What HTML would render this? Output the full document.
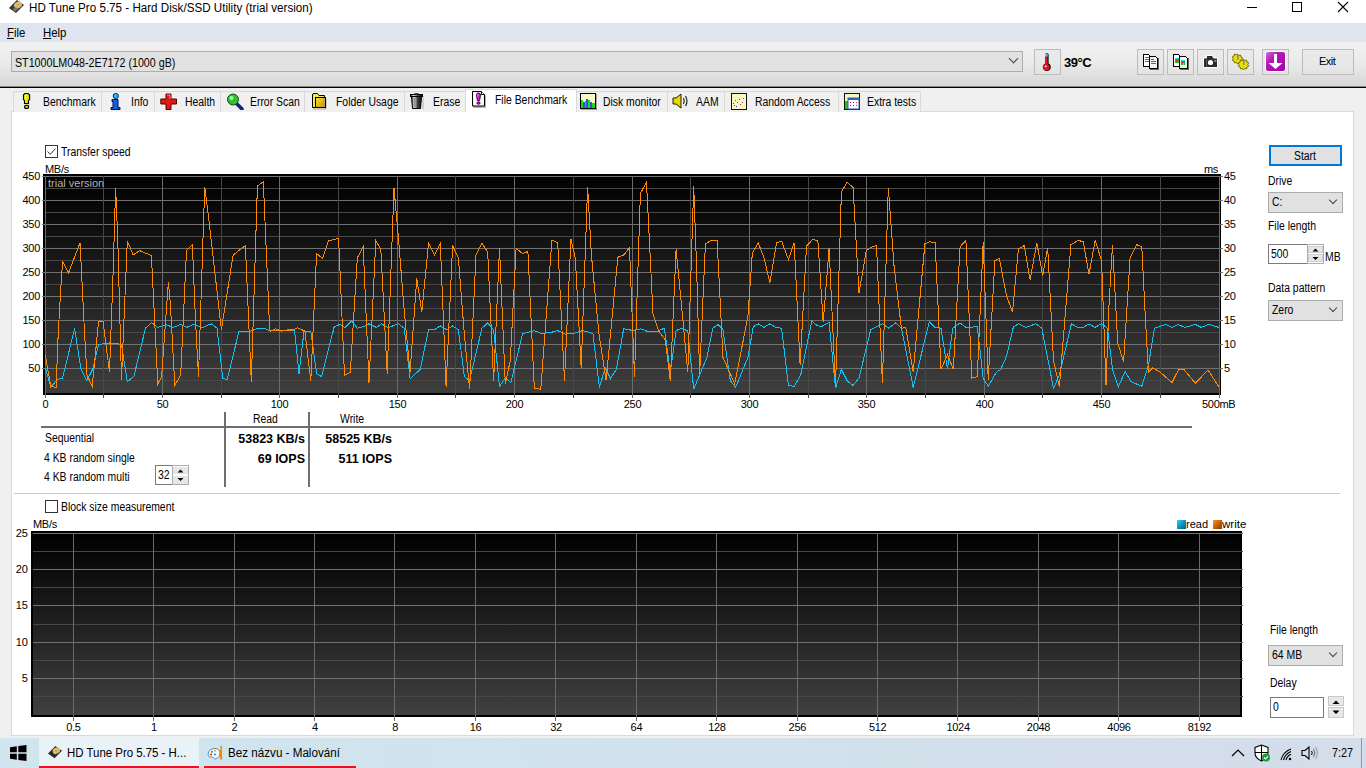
<!DOCTYPE html><html><head><meta charset="utf-8"><style>
*{margin:0;padding:0;box-sizing:border-box}
html,body{width:1366px;height:768px;overflow:hidden;background:#f0f0f0;font-family:"Liberation Sans",sans-serif;font-size:11px;color:#000}
body{position:relative}
.a{position:absolute;white-space:nowrap;line-height:1}
.n{transform-origin:0 0}
.tab{position:absolute;top:91px;height:21px;background:#f0f0f0;border:1px solid #d9d9d9;border-bottom:none}
.tab.sel{top:89px;height:23px;background:#fff;z-index:2}
.tb{position:absolute;top:49px;height:26px;border:1px solid #bcbcbc;background:rgba(230,230,230,.5)}
.combo{position:absolute;background:#e1e1e1;border:1px solid #acacac}
.chev{position:absolute;width:7px;height:7px;border-right:1px solid #444;border-bottom:1px solid #444;transform:rotate(45deg)}
.lbl{position:absolute;white-space:nowrap;line-height:1;font-size:11px;letter-spacing:-0.3px}
</style></head><body>
<div class="a" style="left:0;top:0;width:1366px;height:23px;background:#fff"></div>
<svg class="a" style="left:8px;top:0px" width="17" height="15" viewBox="0 0 17 15">
<polygon points="1,8 9,0 16,5 8,13" fill="#2a2a2a"/>
<polygon points="2,8 9,1 15,5 8,12" fill="#3a3a3a"/>
<ellipse cx="10" cy="5" rx="4.2" ry="3.3" fill="#e8b868" transform="rotate(-30 10 5)"/>
<circle cx="10" cy="5" r="1.3" fill="#aaa"/>
<rect x="5" y="8" width="4" height="3" fill="#777" transform="rotate(-35 7 9)"/>
</svg>
<div class="a" style="left:29px;top:2px;font-size:12.5px;letter-spacing:0px;color:#000;transform:scaleX(0.93);transform-origin:0 0;">HD Tune Pro 5.75 - Hard Disk/SSD Utility (trial version)</div>
<div class="a" style="left:1247px;top:7px;width:10px;height:1px;background:#000"></div>
<div class="a" style="left:1292px;top:2px;width:10px;height:10px;border:1px solid #000"></div>
<svg class="a" style="left:1337px;top:1px" width="12" height="12" viewBox="0 0 12 12"><path d="M1 1L11 11M11 1L1 11" stroke="#000" stroke-width="1.1"/></svg>
<div class="a" style="left:0;top:23px;width:1366px;height:19px;background:#dee5ef"></div>
<div class="a" style="left:7px;top:27px;font-size:12px;letter-spacing:0px;color:#000;transform:scaleX(0.95);transform-origin:0 0;"><u>F</u>ile</div>
<div class="a" style="left:43px;top:27px;font-size:12px;letter-spacing:0px;color:#000;transform:scaleX(0.95);transform-origin:0 0;"><u>H</u>elp</div>
<div class="a" style="left:0;top:42px;width:1366px;height:45px;background:linear-gradient(#f1f1f1,#ebebeb 45%,#d6d6d6)"></div>
<div class="a" style="left:0;top:87px;width:1366px;height:1px;background:#000"></div>
<div class="a" style="left:0;top:86px;width:1366px;height:1px;background:#8a8a8a"></div>
<div class="combo" style="left:11px;top:51px;width:1012px;height:21px"></div>
<div class="a" style="left:15px;top:56.5px;font-size:12px;letter-spacing:0px;color:#000;transform:scaleX(0.89);transform-origin:0 0;">ST1000LM048-2E7172 (1000 gB)</div>
<div class="chev" style="left:1010px;top:55px"></div>
<div class="tb" style="left:1034px;top:49px;width:27px;height:26px"></div>
<svg class="a" style="left:1042px;top:52px" width="11" height="19" viewBox="0 0 11 19">
<path d="M3 2.5Q3 1 4.8 1Q6.6 1 6.6 2.5V11.5A4 4 0 1 1 3 11.5Z" fill="#000"/><path d="M3 3Q3 1.5 4.3 1.5Q5.6 1.5 5.6 3V12A3.4 3.4 0 1 1 3 12Z" fill="#e81020"/>
<rect x="3" y="1.5" width="2.6" height="3" fill="#40d8f0"/><circle cx="3.8" cy="14.3" r="0.9" fill="#fff"/><path d="M1.2 13.5Q1.3 12.5 2 12" stroke="#40d8f0" fill="none"/></svg>
<div class="a" style="left:1064px;top:55.5px;font-size:13px;letter-spacing:-0.5px;color:#000;font-weight:bold;">39°C</div>
<div class="tb" style="left:1137px;width:27px"></div>
<div class="tb" style="left:1167px;width:27px"></div>
<div class="tb" style="left:1197px;width:27px"></div>
<div class="tb" style="left:1227px;width:27px"></div>
<div class="tb" style="left:1262px;width:27px"></div>
<div class="tb" style="left:1302px;width:52px"></div>
<div class="a" style="left:1319px;top:56px;font-size:11px;letter-spacing:-0.5px;color:#000;">Exit</div>
<svg class="a" style="left:1142px;top:53px" width="18" height="17" viewBox="0 0 18 17" shape-rendering="crispEdges">
<path d="M1.5 1.5h5l1 1v11h-6z" fill="#fff" stroke="#000"/><rect x="3" y="4" width="4" height="1" fill="#1a6cff"/><rect x="3" y="6" width="4" height="1" fill="#1a6cff"/><rect x="3" y="8" width="4" height="1" fill="#1a6cff"/>
<path d="M7.5 3.5h6l2 2v10h-8z" fill="#f4f4f4" stroke="#000"/><rect x="16" y="5" width="1" height="11" fill="#666"/><rect x="8" y="16" width="9" height="1" fill="#666"/><rect x="9" y="6" width="3" height="1" fill="#1a6cff"/><rect x="9" y="8" width="5" height="1" fill="#1a6cff"/><rect x="9" y="10" width="5" height="1" fill="#1a6cff"/></svg>
<svg class="a" style="left:1172px;top:53px" width="18" height="17" viewBox="0 0 18 17" shape-rendering="crispEdges">
<path d="M1.5 1.5h5l1 1v11h-6z" fill="#fff" stroke="#000"/><rect x="3" y="5" width="4" height="1" fill="#20d0ff"/><rect x="3" y="6" width="4" height="4" fill="#10c010"/><rect x="4" y="7" width="1" height="1" fill="#e00"/>
<path d="M7.5 3.5h6l2 2v10h-8z" fill="#f4f4f4" stroke="#000"/><rect x="16" y="5" width="1" height="11" fill="#666"/><rect x="8" y="16" width="9" height="1" fill="#666"/><rect x="9" y="7" width="4" height="1" fill="#20d0ff"/><rect x="9" y="8" width="4" height="4" fill="#10c010"/><rect x="10" y="9" width="1" height="1" fill="#e00"/><rect x="11" y="10" width="1" height="2" fill="#e0d000"/></svg>
<svg class="a" style="left:1202px;top:54px" width="17" height="15" viewBox="0 0 17 15">
<path d="M4.5 1.5h6l1 2.5h4v9.5h-14v-9.5h3z" fill="#2b2b2b" stroke="#fff" stroke-width="1"/><rect x="4" y="4" width="1" height="9" fill="#555"/><circle cx="8.5" cy="8.5" r="2.6" fill="#fff"/><rect x="12.5" y="6" width="2" height="2" fill="#20e020"/></svg>
<svg class="a" style="left:1232px;top:53px" width="18" height="17" viewBox="0 0 18 17">
<g fill="#e8e000" stroke="#5a5000" stroke-width="0.8"><path d="M5.5 1l1.2 1.6 1.9-.5.3 1.9 1.8.8-.9 1.7.9 1.7-1.8.8-.3 1.9-1.9-.5L5.5 11 4.3 9.4l-1.9.5-.3-1.9L.3 7.2 1.2 5.5.3 3.8l1.8-.8.3-1.9 1.9.5z"/>
<path d="M11.5 6l1.2 1.6 1.9-.5.3 1.9 1.8.8-.9 1.7.9 1.7-1.8.8-.3 1.9-1.9-.5-1.2 1.6-1.2-1.6-1.9.5-.3-1.9-1.8-.8.9-1.7-.9-1.7 1.8-.8.3-1.9 1.9.5z"/></g>
<rect x="5" y="2" width="1.6" height="5" fill="#8a8aa0"/><rect x="11" y="7" width="1.6" height="5" fill="#8a8aa0"/></svg>
<svg class="a" style="left:1265px;top:51px" width="21" height="21" viewBox="0 0 21 21">
<defs><linearGradient id="pg" x1="0" y1="0" x2="1" y2="1"><stop offset="0" stop-color="#e070e0"/><stop offset=".35" stop-color="#b818b8"/><stop offset="1" stop-color="#a000a8"/></linearGradient></defs>
<rect x="0.5" y="0.5" width="20" height="20" rx="2.5" fill="url(#pg)" stroke="#fff" stroke-width="1"/>
<rect x="9" y="3" width="3" height="10" fill="#fff"/><path d="M3.5 12h14l-7 6z" fill="#fff"/></svg>
<div class="a" style="left:11px;top:111px;width:1343px;height:625px;background:#fff;border:1px solid #dadada"></div>
<div class="tab" style="left:13px;width:89px"></div>
<div class="a" style="left:42.5px;top:96.1px;font-size:12px;letter-spacing:0px;color:#000;transform:scaleX(0.867);transform-origin:0 0;z-index:3">Benchmark</div>
<div class="tab" style="left:101px;width:54px"></div>
<div class="a" style="left:131px;top:96.1px;font-size:12px;letter-spacing:0px;color:#000;transform:scaleX(0.867);transform-origin:0 0;z-index:3">Info</div>
<div class="tab" style="left:154px;width:67px"></div>
<div class="a" style="left:184.6px;top:96.1px;font-size:12px;letter-spacing:0px;color:#000;transform:scaleX(0.867);transform-origin:0 0;z-index:3">Health</div>
<div class="tab" style="left:220px;width:85px"></div>
<div class="a" style="left:250px;top:96.1px;font-size:12px;letter-spacing:0px;color:#000;transform:scaleX(0.867);transform-origin:0 0;z-index:3">Error Scan</div>
<div class="tab" style="left:304px;width:101px"></div>
<div class="a" style="left:335.6px;top:96.1px;font-size:12px;letter-spacing:0px;color:#000;transform:scaleX(0.867);transform-origin:0 0;z-index:3">Folder Usage</div>
<div class="tab" style="left:404px;width:62px"></div>
<div class="a" style="left:433.4px;top:96.1px;font-size:12px;letter-spacing:0px;color:#000;transform:scaleX(0.867);transform-origin:0 0;z-index:3">Erase</div>
<div class="tab sel" style="left:465px;width:112px"></div>
<div class="a" style="left:495px;top:94.1px;font-size:12px;letter-spacing:0px;color:#000;transform:scaleX(0.867);transform-origin:0 0;z-index:3">File Benchmark</div>
<div class="tab" style="left:576px;width:92px"></div>
<div class="a" style="left:603px;top:96.1px;font-size:12px;letter-spacing:0px;color:#000;transform:scaleX(0.867);transform-origin:0 0;z-index:3">Disk monitor</div>
<div class="tab" style="left:667px;width:58px"></div>
<div class="a" style="left:696px;top:96.1px;font-size:12px;letter-spacing:0px;color:#000;transform:scaleX(0.867);transform-origin:0 0;z-index:3">AAM</div>
<div class="tab" style="left:724px;width:115px"></div>
<div class="a" style="left:754.5px;top:96.1px;font-size:12px;letter-spacing:0px;color:#000;transform:scaleX(0.867);transform-origin:0 0;z-index:3">Random Access</div>
<div class="tab" style="left:838px;width:83px"></div>
<div class="a" style="left:867px;top:96.1px;font-size:12px;letter-spacing:0px;color:#000;transform:scaleX(0.867);transform-origin:0 0;z-index:3">Extra tests</div>
<svg class="a" style="left:22px;top:92px;z-index:3" width="11" height="18" viewBox="0 0 11 18">
<path d="M3 1.5h3l1.5 1.2V7.5L6.5 8.6V11.5h-4V8.6L1.5 7.5V2.7z" fill="#e6e600" stroke="#000" stroke-width="1.1"/><rect x="3" y="3" width="1.2" height="4" fill="#ffff90"/>
<rect x="2.6" y="13.4" width="4" height="3" rx="1.2" fill="#d8d800" stroke="#000" stroke-width="1.1"/><path d="M8.3 3v5M7.3 12v1" stroke="#777" stroke-width=".8" opacity=".5"/></svg>
<svg class="a" style="left:110px;top:93px;z-index:3" width="11" height="17" viewBox="0 0 11 17">
<circle cx="5.8" cy="3" r="2.6" fill="#20c0ff" stroke="#002060"/><path d="M2 6.5h6v8h2v2H1v-2h2v-6H2z" fill="#1060e0" stroke="#001040"/></svg>
<svg class="a" style="left:160px;top:93px;z-index:3" width="18" height="17" viewBox="0 0 18 17">
<path d="M6 1h5v5h5.5v5H11v5.5H6V11H0.8V6H6z" fill="#e01818" stroke="#500" stroke-width="1"/><path d="M7 2h3v4" stroke="#ff9090" fill="none"/></svg>
<svg class="a" style="left:226px;top:93px;z-index:3" width="18" height="17" viewBox="0 0 18 17">
<path d="M10 10L16 16" stroke="#102080" stroke-width="3.5" stroke-linecap="round"/><circle cx="7" cy="6.5" r="5.5" fill="#30c030" stroke="#105010"/><circle cx="5.5" cy="5" r="2" fill="#a0ffa0"/></svg>
<svg class="a" style="left:311px;top:92px;z-index:3" width="18" height="18" viewBox="0 0 18 18">
<defs><linearGradient id="fg" x1="0" y1="0" x2="1" y2="1"><stop offset="0" stop-color="#f0e040"/><stop offset="1" stop-color="#d09000"/></linearGradient></defs>
<path d="M2 17h13v-11" stroke="#000" opacity=".3" fill="none"/>
<path d="M1.5 15.5V3Q1.5 1.5 3 1.5H6.5L8 3.5H13.5V5.5H4.5V15.5Z" fill="#f8e850" stroke="#000"/>
<rect x="4.5" y="5.5" width="10" height="10" fill="url(#fg)" stroke="#000"/><path d="M13 6v9" stroke="#a0a0a0"/></svg>
<svg class="a" style="left:409px;top:92px;z-index:3" width="17" height="18" viewBox="0 0 17 18">
<defs><linearGradient id="tg" x1="0" x2="1"><stop offset="0" stop-color="#222"/><stop offset=".25" stop-color="#ddd"/><stop offset=".45" stop-color="#888"/><stop offset=".7" stop-color="#333"/><stop offset="1" stop-color="#111"/></linearGradient></defs>
<path d="M2.5 4.5h10l-1 12h-8z" fill="url(#tg)" stroke="#000"/><rect x="1.5" y="2.5" width="12" height="2" fill="url(#tg)" stroke="#000"/><rect x="5.5" y="1" width="4" height="1.5" fill="#444"/>
<path d="M5.5 6v9M8.5 6v9" stroke="#000" stroke-width=".6" opacity=".5"/><path d="M14 4v13" stroke="#000" opacity=".25"/></svg>
<svg class="a" style="left:471px;top:90px;z-index:3" width="17" height="19" viewBox="0 0 17 19">
<path d="M2 3h10l3 3v12H2z" fill="#000" opacity=".3"/>
<path d="M1.5 1.5h9l3 3v11.5h-12z" fill="#f6f6f6" stroke="#000"/><path d="M10.5 1.5v3h3" fill="#fff" stroke="#000"/>
<path d="M5.5 5Q5.5 3 7.5 3Q9.5 3 9.5 5L8.6 10.5H6.4Z" fill="#e010e0" stroke="#300030" stroke-width=".9"/><ellipse cx="7.5" cy="13" rx="1.6" ry="1.2" fill="#e010e0" stroke="#300030" stroke-width=".9"/><rect x="6.3" y="4.2" width="1" height="2.5" fill="#ff90ff"/></svg>
<svg class="a" style="left:580px;top:93px;z-index:3" width="17" height="17" viewBox="0 0 17 17" shape-rendering="crispEdges">
<rect x="0" y="0" width="16" height="16" fill="#000"/><rect x="1" y="1" width="14" height="14" fill="#fafac8"/>
<rect x="1" y="7" width="2" height="8" fill="#10e010"/><rect x="3" y="9" width="2" height="6" fill="#3050e0"/><rect x="5" y="8" width="1" height="7" fill="#10e010"/><rect x="6" y="6" width="2" height="9" fill="#3050e0"/><rect x="8" y="7" width="2" height="8" fill="#10e010"/><rect x="10" y="9" width="2" height="6" fill="#3050e0"/><rect x="12" y="10" width="3" height="5" fill="#10e010"/>
<rect x="16" y="1" width="1" height="16" fill="#000" opacity=".3"/><rect x="1" y="16" width="16" height="1" fill="#000" opacity=".3"/></svg>
<svg class="a" style="left:672px;top:93px;z-index:3" width="18" height="16" viewBox="0 0 18 16">
<path d="M1 5h3l5-4v14l-5-4H1z" fill="#e8d800" stroke="#202000"/><path d="M11.5 5q1.5 3 0 6M13.5 3q3 5 0 10" stroke="#222" fill="none" stroke-width="1.2"/></svg>
<svg class="a" style="left:731px;top:93px;z-index:3" width="16" height="17" viewBox="0 0 16 17">
<rect x="0.5" y="0.5" width="15" height="16" fill="#f8f8c0" stroke="#111"/><g fill="#e02020"><rect x="3" y="12" width="1" height="1"/><rect x="6" y="9" width="1" height="1"/><rect x="9" y="11" width="1" height="1"/><rect x="12" y="5" width="1" height="1"/><rect x="4" y="7" width="1" height="1"/></g><g fill="#2040e0"><rect x="5" y="13" width="1" height="1"/><rect x="8" y="6" width="1" height="1"/><rect x="11" y="9" width="1" height="1"/><rect x="2" y="10" width="1" height="1"/></g></svg>
<svg class="a" style="left:844px;top:93px;z-index:3" width="16" height="17" viewBox="0 0 16 17">
<rect x="0.5" y="0.5" width="15" height="16" fill="#f8f8c0" stroke="#111"/><rect x="1" y="8" width="3" height="8" fill="#20c020"/><rect x="4" y="5" width="11" height="11" fill="#fff" stroke="#3060c0"/><rect x="4" y="5" width="11" height="2" fill="#3060c0"/><g fill="#e02020"><rect x="6" y="9" width="1" height="1"/><rect x="9" y="9" width="1" height="1"/><rect x="12" y="9" width="1" height="1"/><rect x="6" y="12" width="1" height="1"/><rect x="9" y="12" width="1" height="1"/><rect x="12" y="12" width="1" height="1"/></g></svg>
<div class="a" style="left:45px;top:145px;width:13px;height:13px;border:1px solid #333;background:#fff"></div>
<svg class="a" style="left:45px;top:145px" width="13" height="13" viewBox="0 0 13 13"><path d="M2.5 6.5l2.8 2.8 5.2-5.8" stroke="#3a3a3a" stroke-width="1" fill="none"/></svg>
<div class="a" style="left:61px;top:145.6px;font-size:12px;letter-spacing:0px;color:#000;transform:scaleX(0.867);transform-origin:0 0;">Transfer speed</div>
<svg class="a" style="left:0;top:0" width="1366" height="768"><defs><linearGradient id="g1" x1="0" y1="0" x2="0" y2="1"><stop offset="0" stop-color="#000"/><stop offset="1" stop-color="#3e3e3e"/></linearGradient></defs><rect x="43" y="174" width="1178" height="221" fill="#000"/><rect x="45" y="176" width="1175" height="217" fill="url(#g1)"/><g shape-rendering="crispEdges"><line x1="45" y1="380.5" x2="1220" y2="380.5" stroke="#474747" stroke-width="1"/><line x1="42" y1="368.5" x2="1223" y2="368.5" stroke="#727272" stroke-width="1"/><line x1="45" y1="356.5" x2="1220" y2="356.5" stroke="#474747" stroke-width="1"/><line x1="42" y1="344.5" x2="1223" y2="344.5" stroke="#727272" stroke-width="1"/><line x1="45" y1="332.5" x2="1220" y2="332.5" stroke="#474747" stroke-width="1"/><line x1="42" y1="320.5" x2="1223" y2="320.5" stroke="#727272" stroke-width="1"/><line x1="45" y1="308.5" x2="1220" y2="308.5" stroke="#474747" stroke-width="1"/><line x1="42" y1="296.5" x2="1223" y2="296.5" stroke="#727272" stroke-width="1"/><line x1="45" y1="284.5" x2="1220" y2="284.5" stroke="#474747" stroke-width="1"/><line x1="42" y1="272.5" x2="1223" y2="272.5" stroke="#727272" stroke-width="1"/><line x1="45" y1="260.5" x2="1220" y2="260.5" stroke="#474747" stroke-width="1"/><line x1="42" y1="248.5" x2="1223" y2="248.5" stroke="#727272" stroke-width="1"/><line x1="45" y1="236.5" x2="1220" y2="236.5" stroke="#474747" stroke-width="1"/><line x1="42" y1="224.5" x2="1223" y2="224.5" stroke="#727272" stroke-width="1"/><line x1="45" y1="212.5" x2="1220" y2="212.5" stroke="#474747" stroke-width="1"/><line x1="42" y1="200.5" x2="1223" y2="200.5" stroke="#727272" stroke-width="1"/><line x1="45" y1="188.5" x2="1220" y2="188.5" stroke="#474747" stroke-width="1"/><line x1="42" y1="176.5" x2="1223" y2="176.5" stroke="#727272" stroke-width="1"/><line x1="45.5" y1="176" x2="45.5" y2="398" stroke="#6c6c6c" stroke-width="1"/><line x1="103.5" y1="176" x2="103.5" y2="398" stroke="#474747" stroke-width="1"/><line x1="162.5" y1="176" x2="162.5" y2="398" stroke="#6c6c6c" stroke-width="1"/><line x1="221.5" y1="176" x2="221.5" y2="398" stroke="#474747" stroke-width="1"/><line x1="279.5" y1="176" x2="279.5" y2="398" stroke="#6c6c6c" stroke-width="1"/><line x1="338.5" y1="176" x2="338.5" y2="398" stroke="#474747" stroke-width="1"/><line x1="397.5" y1="176" x2="397.5" y2="398" stroke="#6c6c6c" stroke-width="1"/><line x1="455.5" y1="176" x2="455.5" y2="398" stroke="#474747" stroke-width="1"/><line x1="514.5" y1="176" x2="514.5" y2="398" stroke="#6c6c6c" stroke-width="1"/><line x1="573.5" y1="176" x2="573.5" y2="398" stroke="#474747" stroke-width="1"/><line x1="632.5" y1="176" x2="632.5" y2="398" stroke="#6c6c6c" stroke-width="1"/><line x1="690.5" y1="176" x2="690.5" y2="398" stroke="#474747" stroke-width="1"/><line x1="749.5" y1="176" x2="749.5" y2="398" stroke="#6c6c6c" stroke-width="1"/><line x1="808.5" y1="176" x2="808.5" y2="398" stroke="#474747" stroke-width="1"/><line x1="866.5" y1="176" x2="866.5" y2="398" stroke="#6c6c6c" stroke-width="1"/><line x1="925.5" y1="176" x2="925.5" y2="398" stroke="#474747" stroke-width="1"/><line x1="984.5" y1="176" x2="984.5" y2="398" stroke="#6c6c6c" stroke-width="1"/><line x1="1042.5" y1="176" x2="1042.5" y2="398" stroke="#474747" stroke-width="1"/><line x1="1101.5" y1="176" x2="1101.5" y2="398" stroke="#6c6c6c" stroke-width="1"/><line x1="1160.5" y1="176" x2="1160.5" y2="398" stroke="#474747" stroke-width="1"/><line x1="1219.5" y1="176" x2="1219.5" y2="398" stroke="#6c6c6c" stroke-width="1"/></g><rect x="46" y="177" width="57" height="11" fill="#000"/><polyline points="45.3,367.8 50.8,386.8 57.6,379.5 62.6,378.1 74.6,328.2 81.0,369.3 86.9,380.4 92.7,369.3 98.6,344.4 110.3,342.9 121.5,344.4 127.3,381.6 133.8,376.6 145.5,328.2 151.4,322.4 157.8,327.4 166.0,324.7 173.3,327.4 180.7,324.4 186.5,327.4 193.8,324.4 202.3,327.7 211.1,323.8 217.0,328.2 222.8,378.6 227.2,379.5 239.0,331.2 250.7,331.2 258.0,328.2 265.3,328.8 270.6,331.2 275.6,328.8 281.4,331.2 291.7,329.1 294.6,330.6 299.0,373.7 304.0,331.2 310.8,331.2 316.6,373.7 321.6,376.6 334.2,326.8 340.1,324.4 345.0,327.4 351.8,320.9 357.3,328.2 363.2,326.8 369.0,323.8 376.4,327.4 381.6,323.8 388.1,327.7 398.4,323.8 404.2,328.2 410.1,378.6 420.3,369.3 428.5,329.7 434.4,329.7 440.3,325.9 446.7,329.7 452.6,325.9 458.4,329.7 464.3,376.6 469.6,380.4 481.9,328.2 487.7,323.0 493.6,329.7 499.5,386.3 505.3,378.1 510.9,382.5 522.6,333.5 534.3,330.6 541.6,333.5 550.4,332.6 557.7,330.6 565.1,334.1 573.9,333.5 582.7,330.6 592.9,333.5 599.4,387.4 605.2,367.8 610.5,378.6 616.4,369.3 623.7,328.8 633.9,330.6 640.4,328.8 647.1,331.2 657.4,331.2 664.4,328.2 670.3,372.2 676.1,330.6 682.0,328.2 687.8,331.2 693.7,389.2 706.9,357.5 712.7,328.2 718.0,324.7 723.0,329.7 730.3,380.4 735.6,387.4 747.9,357.5 753.2,326.8 758.2,323.8 764.0,327.4 769.9,323.8 775.8,327.4 781.6,328.2 788.4,385.4 794.2,386.3 800.7,375.1 811.8,320.9 816.8,325.3 820.9,326.8 829.1,322.4 835.5,388.3 841.4,369.3 847.2,381.0 853.1,385.4 859.0,378.1 870.7,329.7 882.4,323.8 888.3,328.2 895.6,323.0 901.4,328.2 913.2,387.4 929.3,321.8 935.1,327.4 941.0,328.2 947.5,369.3 952.7,328.2 960.1,323.0 965.9,327.4 977.3,326.8 983.2,378.1 988.2,386.3 996.4,372.2 1000.8,369.3 1006.6,356.1 1013.4,326.8 1018.4,323.8 1025.7,327.4 1035.9,323.8 1041.8,328.2 1053.5,388.3 1059.4,375.1 1071.4,323.8 1077.3,327.4 1083.2,327.4 1089.0,323.8 1094.9,327.4 1101.6,323.8 1107.5,328.2 1112.5,369.3 1118.3,386.8 1125.1,371.6 1130.9,381.6 1141.8,386.3 1148.5,364.9 1154.4,328.2 1166.1,324.4 1172.0,327.4 1177.8,324.4 1184.6,327.4 1195.4,324.4 1201.3,327.4 1208.6,324.4 1218.8,327.4" fill="none" stroke="#12c2f2" stroke-width="1" shape-rendering="crispEdges"/><polyline points="45.3,355.2 50.8,386.3 56.1,387.4 58.2,334.1 60.5,293.1 62.6,260.8 68.4,273.2 80.1,242.7 84.0,322.4 86.9,375.1 92.2,386.3 98.6,321.2 103.0,321.2 109.5,372.2 113.3,266.7 115.6,187.6 117.7,237.4 121.5,379.5 127.3,240.9 133.2,255.0 139.6,250.6 151.4,255.6 157.8,383.9 161.6,376.6 168.4,281.9 170.4,304.8 174.8,385.4 180.7,375.1 186.5,250.6 192.4,244.7 195.3,316.5 198.5,376.6 204.7,187.0 208.2,214.0 221.4,329.7 233.1,255.0 245.4,245.6 251.3,381.6 257.4,186.1 263.3,181.7 269.7,330.6 291.7,330.6 297.6,327.7 304.9,331.2 310.8,381.0 316.6,253.5 322.5,258.5 328.3,240.9 338.6,238.3 344.5,375.1 350.3,372.2 357.3,257.9 363.2,246.8 369.0,382.5 375.8,240.9 380.8,249.1 387.2,373.7 394.0,188.2 398.4,237.4 404.2,310.7 410.1,372.2 416.8,278.4 421.8,312.1 428.5,243.3 434.4,255.0 440.3,243.3 446.1,386.8 452.6,245.6 458.4,257.9 464.3,334.1 469.6,389.2 476.0,255.0 481.9,243.3 487.7,252.1 493.6,381.0 499.5,248.5 505.3,383.9 510.3,360.5 516.1,248.5 522.6,253.5 527.9,251.5 534.3,388.3 540.8,389.2 551.9,240.3 557.7,242.7 564.5,381.0 570.9,238.9 575.3,257.9 581.2,367.8 587.6,187.0 591.4,255.0 598.8,332.6 606.1,380.4 617.8,257.3 623.7,255.0 629.5,247.7 634.5,376.6 640.4,193.4 646.5,182.3 653.0,313.6 658.8,331.2 665.3,340.0 670.3,381.0 676.1,249.1 682.0,310.7 687.8,372.2 693.7,186.1 696.6,266.7 699.6,375.1 705.4,243.8 711.3,240.3 717.1,240.3 723.0,357.5 734.7,383.9 747.9,316.5 752.3,253.5 758.2,242.7 764.0,257.9 769.9,282.8 776.6,242.7 781.6,241.2 788.4,259.4 794.2,242.7 800.1,364.9 806.5,246.2 812.4,239.7 816.8,240.3 817.9,240.9 823.2,322.4 829.1,248.5 835.5,386.8 841.4,192.0 847.2,182.3 853.1,187.6 859.0,293.1 866.3,250.6 872.1,246.8 876.5,245.6 882.4,383.3 888.3,187.6 894.1,266.7 901.4,328.2 905.8,327.7 913.2,372.2 924.9,243.8 929.3,241.8 935.1,242.7 941.0,369.3 947.5,354.6 953.3,369.3 960.1,246.8 965.9,240.3 971.8,378.1 977.3,376.6 983.2,241.8 988.2,379.5 994.9,260.8 999.3,258.5 1006.6,296.0 1012.5,312.1 1018.4,249.1 1024.2,245.6 1030.1,279.9 1036.8,242.7 1042.7,275.5 1047.7,247.7 1053.5,360.5 1059.4,386.8 1070.9,244.7 1078.2,240.3 1083.2,241.8 1089.0,274.0 1095.2,240.3 1101.6,260.8 1104.6,345.8 1106.0,385.4 1109.0,304.8 1112.5,244.7 1117.7,342.9 1123.6,361.9 1130.1,257.9 1136.8,244.7 1141.8,246.8 1145.6,322.4 1148.5,372.2 1152.9,367.8 1160.2,372.2 1172.0,382.5 1178.7,369.3 1183.7,369.3 1195.4,383.3 1208.0,369.9 1218.8,386.8" fill="none" stroke="#ff8a00" stroke-width="1" shape-rendering="crispEdges"/></svg>
<div class="a" style="left:48px;top:178px;font-size:11px;letter-spacing:0px;color:#b4b4b4;">trial version</div>
<div class="a" style="left:45px;top:164px;font-size:11px;letter-spacing:-0.3px;color:#000;">MB/s</div>
<div class="a" style="left:1204px;top:164px;font-size:11px;letter-spacing:-0.3px;color:#000;">ms</div>
<div class="a" style="left:0;width:40px;text-align:right;top:362.5px;font-size:11px;letter-spacing:-0.3px">50</div>
<div class="a" style="left:0;width:40px;text-align:right;top:338.5px;font-size:11px;letter-spacing:-0.3px">100</div>
<div class="a" style="left:0;width:40px;text-align:right;top:314.5px;font-size:11px;letter-spacing:-0.3px">150</div>
<div class="a" style="left:0;width:40px;text-align:right;top:290.5px;font-size:11px;letter-spacing:-0.3px">200</div>
<div class="a" style="left:0;width:40px;text-align:right;top:266.5px;font-size:11px;letter-spacing:-0.3px">250</div>
<div class="a" style="left:0;width:40px;text-align:right;top:242.5px;font-size:11px;letter-spacing:-0.3px">300</div>
<div class="a" style="left:0;width:40px;text-align:right;top:218.5px;font-size:11px;letter-spacing:-0.3px">350</div>
<div class="a" style="left:0;width:40px;text-align:right;top:194.5px;font-size:11px;letter-spacing:-0.3px">400</div>
<div class="a" style="left:0;width:40px;text-align:right;top:170.5px;font-size:11px;letter-spacing:-0.3px">450</div>
<div class="a" style="left:1224px;top:363.0px;font-size:11px;letter-spacing:-0.3px">5</div>
<div class="a" style="left:1224px;top:339.0px;font-size:11px;letter-spacing:-0.3px">10</div>
<div class="a" style="left:1224px;top:315.0px;font-size:11px;letter-spacing:-0.3px">15</div>
<div class="a" style="left:1224px;top:291.0px;font-size:11px;letter-spacing:-0.3px">20</div>
<div class="a" style="left:1224px;top:267.0px;font-size:11px;letter-spacing:-0.3px">25</div>
<div class="a" style="left:1224px;top:243.0px;font-size:11px;letter-spacing:-0.3px">30</div>
<div class="a" style="left:1224px;top:219.0px;font-size:11px;letter-spacing:-0.3px">35</div>
<div class="a" style="left:1224px;top:195.0px;font-size:11px;letter-spacing:-0.3px">40</div>
<div class="a" style="left:1224px;top:171.0px;font-size:11px;letter-spacing:-0.3px">45</div>
<div class="a" style="left:25.5px;width:40px;text-align:center;top:399px;font-size:11px;letter-spacing:-0.3px">0</div>
<div class="a" style="left:142.5px;width:40px;text-align:center;top:399px;font-size:11px;letter-spacing:-0.3px">50</div>
<div class="a" style="left:259.5px;width:40px;text-align:center;top:399px;font-size:11px;letter-spacing:-0.3px">100</div>
<div class="a" style="left:377.5px;width:40px;text-align:center;top:399px;font-size:11px;letter-spacing:-0.3px">150</div>
<div class="a" style="left:494.5px;width:40px;text-align:center;top:399px;font-size:11px;letter-spacing:-0.3px">200</div>
<div class="a" style="left:612.5px;width:40px;text-align:center;top:399px;font-size:11px;letter-spacing:-0.3px">250</div>
<div class="a" style="left:729.5px;width:40px;text-align:center;top:399px;font-size:11px;letter-spacing:-0.3px">300</div>
<div class="a" style="left:846.5px;width:40px;text-align:center;top:399px;font-size:11px;letter-spacing:-0.3px">350</div>
<div class="a" style="left:964.5px;width:40px;text-align:center;top:399px;font-size:11px;letter-spacing:-0.3px">400</div>
<div class="a" style="left:1081.5px;width:40px;text-align:center;top:399px;font-size:11px;letter-spacing:-0.3px">450</div>
<div class="a" style="left:1202px;top:399px;font-size:11px;letter-spacing:-0.3px;color:#000;">500mB</div>
<div class="a" style="left:41px;top:426px;width:1151px;height:2px;background:#6e6e6e"></div>
<div class="a" style="left:224px;top:412px;width:2px;height:75px;background:#6e6e6e"></div>
<div class="a" style="left:308px;top:412px;width:2px;height:75px;background:#6e6e6e"></div>
<div class="a" style="left:253px;top:413.1px;font-size:12px;letter-spacing:0px;color:#000;transform:scaleX(0.867);transform-origin:0 0;">Read</div>
<div class="a" style="left:340px;top:413.1px;font-size:12px;letter-spacing:0px;color:#000;transform:scaleX(0.867);transform-origin:0 0;">Write</div>
<div class="a" style="left:45px;top:432.1px;font-size:12px;letter-spacing:0px;color:#000;transform:scaleX(0.867);transform-origin:0 0;">Sequential</div>
<div class="a" style="left:44px;top:452.1px;font-size:12px;letter-spacing:0px;color:#000;transform:scaleX(0.867);transform-origin:0 0;">4 KB random single</div>
<div class="a" style="left:44px;top:471.1px;font-size:12px;letter-spacing:0px;color:#000;transform:scaleX(0.867);transform-origin:0 0;">4 KB random multi</div>
<div class="a" style="left:155px;top:465px;width:22px;height:20px;border:1px solid #7a7a7a;border-right:none;background:#fff"></div>
<div class="a" style="left:158px;top:468.6px;font-size:12px;letter-spacing:0px;color:#000;transform:scaleX(0.867);transform-origin:0 0;">32</div>
<div class="a" style="left:172px;top:465px;width:17px;height:20px;border:1px solid #adadad;background:#fff"></div>
<div class="a" style="left:173px;top:467px;width:15px;height:7px;background:#e6e6e6"></div>
<div class="a" style="left:173px;top:476px;width:15px;height:8px;background:#e6e6e6"></div>
<svg class="a" style="left:176px;top:468px" width="9" height="14" viewBox="0 0 9 14"><path d="M1.5 4.5h6l-3-3z M1.5 10h6l-3 3z" fill="#000"/></svg>
<div class="a" style="left:200px;top:432.5px;width:105px;text-align:right;font-size:12.5px;font-weight:bold;letter-spacing:0px">53823 KB/s</div>
<div class="a" style="left:200px;top:452.5px;width:105px;text-align:right;font-size:12.5px;font-weight:bold;letter-spacing:0px">69 IOPS</div>
<div class="a" style="left:290px;top:432.5px;width:102px;text-align:right;font-size:12.5px;font-weight:bold;letter-spacing:0px">58525 KB/s</div>
<div class="a" style="left:290px;top:452.5px;width:102px;text-align:right;font-size:12.5px;font-weight:bold;letter-spacing:0px">511 IOPS</div>
<div class="a" style="left:14px;top:493px;width:1326px;height:1px;background:#c8c8c8"></div>
<div class="a" style="left:45px;top:500px;width:13px;height:13px;border:1px solid #333;background:#fff"></div>
<div class="a" style="left:61px;top:501.1px;font-size:12px;letter-spacing:0px;color:#000;transform:scaleX(0.867);transform-origin:0 0;">Block size measurement</div>
<div class="a" style="left:33px;top:519px;font-size:11px;letter-spacing:-0.3px;color:#000;">MB/s</div>
<svg class="a" style="left:0;top:0" width="1366" height="768"><defs><linearGradient id="g2" x1="0" y1="0" x2="0" y2="1"><stop offset="0" stop-color="#000"/><stop offset="1" stop-color="#404040"/></linearGradient></defs><rect x="31" y="531" width="1211" height="186" fill="#000"/><rect x="33" y="533" width="1207" height="182" fill="url(#g2)"/><g shape-rendering="crispEdges"><line x1="33" y1="533.5" x2="1243" y2="533.5" stroke="#727272"/><line x1="33" y1="551.5" x2="1243" y2="551.5" stroke="#474747"/><line x1="33" y1="569.5" x2="1243" y2="569.5" stroke="#727272"/><line x1="33" y1="587.5" x2="1243" y2="587.5" stroke="#474747"/><line x1="33" y1="605.5" x2="1243" y2="605.5" stroke="#727272"/><line x1="33" y1="624.5" x2="1243" y2="624.5" stroke="#474747"/><line x1="33" y1="642.5" x2="1243" y2="642.5" stroke="#727272"/><line x1="33" y1="660.5" x2="1243" y2="660.5" stroke="#474747"/><line x1="33" y1="678.5" x2="1243" y2="678.5" stroke="#727272"/><line x1="33" y1="696.5" x2="1243" y2="696.5" stroke="#474747"/><line x1="73.5" y1="533" x2="73.5" y2="721" stroke="#6a6a6a"/><line x1="153.5" y1="533" x2="153.5" y2="721" stroke="#6a6a6a"/><line x1="234.5" y1="533" x2="234.5" y2="721" stroke="#6a6a6a"/><line x1="314.5" y1="533" x2="314.5" y2="721" stroke="#6a6a6a"/><line x1="394.5" y1="533" x2="394.5" y2="721" stroke="#6a6a6a"/><line x1="475.5" y1="533" x2="475.5" y2="721" stroke="#6a6a6a"/><line x1="555.5" y1="533" x2="555.5" y2="721" stroke="#6a6a6a"/><line x1="636.5" y1="533" x2="636.5" y2="721" stroke="#6a6a6a"/><line x1="716.5" y1="533" x2="716.5" y2="721" stroke="#6a6a6a"/><line x1="797.5" y1="533" x2="797.5" y2="721" stroke="#6a6a6a"/><line x1="877.5" y1="533" x2="877.5" y2="721" stroke="#6a6a6a"/><line x1="957.5" y1="533" x2="957.5" y2="721" stroke="#6a6a6a"/><line x1="1038.5" y1="533" x2="1038.5" y2="721" stroke="#6a6a6a"/><line x1="1118.5" y1="533" x2="1118.5" y2="721" stroke="#6a6a6a"/><line x1="1199.5" y1="533" x2="1199.5" y2="721" stroke="#6a6a6a"/></g></svg>
<div class="a" style="left:0;width:27.5px;text-align:right;top:528.0px;font-size:11px;letter-spacing:-0.3px">25</div>
<div class="a" style="left:0;width:27.5px;text-align:right;top:564.0px;font-size:11px;letter-spacing:-0.3px">20</div>
<div class="a" style="left:0;width:27.5px;text-align:right;top:600.0px;font-size:11px;letter-spacing:-0.3px">15</div>
<div class="a" style="left:0;width:27.5px;text-align:right;top:637.0px;font-size:11px;letter-spacing:-0.3px">10</div>
<div class="a" style="left:0;width:27.5px;text-align:right;top:673.0px;font-size:11px;letter-spacing:-0.3px">5</div>
<div class="a" style="left:48.5px;width:50px;text-align:center;top:722px;font-size:11px;letter-spacing:-0.3px">0.5</div>
<div class="a" style="left:128.9px;width:50px;text-align:center;top:722px;font-size:11px;letter-spacing:-0.3px">1</div>
<div class="a" style="left:209.3px;width:50px;text-align:center;top:722px;font-size:11px;letter-spacing:-0.3px">2</div>
<div class="a" style="left:289.8px;width:50px;text-align:center;top:722px;font-size:11px;letter-spacing:-0.3px">4</div>
<div class="a" style="left:370.2px;width:50px;text-align:center;top:722px;font-size:11px;letter-spacing:-0.3px">8</div>
<div class="a" style="left:450.6px;width:50px;text-align:center;top:722px;font-size:11px;letter-spacing:-0.3px">16</div>
<div class="a" style="left:531.0px;width:50px;text-align:center;top:722px;font-size:11px;letter-spacing:-0.3px">32</div>
<div class="a" style="left:611.4px;width:50px;text-align:center;top:722px;font-size:11px;letter-spacing:-0.3px">64</div>
<div class="a" style="left:691.9px;width:50px;text-align:center;top:722px;font-size:11px;letter-spacing:-0.3px">128</div>
<div class="a" style="left:772.3px;width:50px;text-align:center;top:722px;font-size:11px;letter-spacing:-0.3px">256</div>
<div class="a" style="left:852.7px;width:50px;text-align:center;top:722px;font-size:11px;letter-spacing:-0.3px">512</div>
<div class="a" style="left:933.1px;width:50px;text-align:center;top:722px;font-size:11px;letter-spacing:-0.3px">1024</div>
<div class="a" style="left:1013.5px;width:50px;text-align:center;top:722px;font-size:11px;letter-spacing:-0.3px">2048</div>
<div class="a" style="left:1094.0px;width:50px;text-align:center;top:722px;font-size:11px;letter-spacing:-0.3px">4096</div>
<div class="a" style="left:1174.4px;width:50px;text-align:center;top:722px;font-size:11px;letter-spacing:-0.3px">8192</div>
<div class="a" style="left:1177px;top:520px;width:9px;height:9px;background:linear-gradient(135deg,#20d8ff,#0a86b8 60%,#075f88)"></div>
<div class="a" style="left:1186px;top:519px;font-size:11px;letter-spacing:0px;color:#000;">read</div>
<div class="a" style="left:1213px;top:520px;width:9px;height:9px;background:linear-gradient(135deg,#ff9020,#c05800 60%,#8a3a00)"></div>
<div class="a" style="left:1222px;top:519px;font-size:11.5px;letter-spacing:0px;color:#000;">write</div>
<div class="a" style="left:1269px;top:145px;width:73px;height:21px;border:2px solid #0078d7;background:#e1e1e1"></div>
<div class="a" style="left:1294px;top:149.6px;font-size:12px;letter-spacing:0px;color:#000;transform:scaleX(0.867);transform-origin:0 0;">Start</div>
<div class="a" style="left:1268px;top:175.1px;font-size:12px;letter-spacing:0px;color:#000;transform:scaleX(0.867);transform-origin:0 0;">Drive</div>
<div class="combo" style="left:1268px;top:192px;width:75px;height:21px"></div>
<div class="a" style="left:1272px;top:196.1px;font-size:12px;letter-spacing:0px;color:#000;transform:scaleX(0.867);transform-origin:0 0;">C:</div>
<div class="chev" style="left:1330px;top:197px;width:6px;height:6px"></div>
<div class="a" style="left:1268px;top:220.1px;font-size:12px;letter-spacing:0px;color:#000;transform:scaleX(0.867);transform-origin:0 0;">File length</div>
<div class="a" style="left:1268px;top:244px;width:40px;height:20px;border:1px solid #7a7a7a;border-right:none;background:#fff"></div>
<div class="a" style="left:1271px;top:247.6px;font-size:12px;letter-spacing:0px;color:#000;transform:scaleX(0.867);transform-origin:0 0;">500</div>
<div class="a" style="left:1307px;top:244px;width:17px;height:20px;border:1px solid #adadad;background:#fff"></div>
<div class="a" style="left:1308px;top:246px;width:15px;height:7px;background:#e6e6e6;border:1px solid #cfcfcf"></div>
<div class="a" style="left:1308px;top:254px;width:15px;height:8px;background:#e6e6e6;border:1px solid #cfcfcf"></div>
<svg class="a" style="left:1311px;top:247px" width="9" height="14" viewBox="0 0 9 14"><path d="M1.5 4.5h6l-3-3z M1.5 10h6l-3 3z" fill="#000"/></svg>
<div class="a" style="left:1325px;top:251.1px;font-size:12px;letter-spacing:0px;color:#000;transform:scaleX(0.867);transform-origin:0 0;">MB</div>
<div class="a" style="left:1268px;top:282.1px;font-size:12px;letter-spacing:0px;color:#000;transform:scaleX(0.867);transform-origin:0 0;">Data pattern</div>
<div class="combo" style="left:1268px;top:300px;width:75px;height:21px"></div>
<div class="a" style="left:1272px;top:304.1px;font-size:12px;letter-spacing:0px;color:#000;transform:scaleX(0.867);transform-origin:0 0;">Zero</div>
<div class="chev" style="left:1330px;top:305px;width:6px;height:6px"></div>
<div class="a" style="left:1270px;top:624.1px;font-size:12px;letter-spacing:0px;color:#000;transform:scaleX(0.867);transform-origin:0 0;">File length</div>
<div class="combo" style="left:1268px;top:645px;width:75px;height:21px"></div>
<div class="a" style="left:1272px;top:649.1px;font-size:12px;letter-spacing:0px;color:#000;transform:scaleX(0.867);transform-origin:0 0;">64 MB</div>
<div class="chev" style="left:1330px;top:650px;width:6px;height:6px"></div>
<div class="a" style="left:1270px;top:677.1px;font-size:12px;letter-spacing:0px;color:#000;transform:scaleX(0.867);transform-origin:0 0;">Delay</div>
<div class="a" style="left:1270px;top:697px;width:54px;height:21px;border:1px solid #7a7a7a;background:#fff"></div>
<div class="a" style="left:1273px;top:701.1px;font-size:12px;letter-spacing:0px;color:#000;transform:scaleX(0.867);transform-origin:0 0;">0</div>
<div class="a" style="left:1328px;top:696px;width:16px;height:10px;border:1px solid #c8c8c8;background:#e8e8e8"></div>
<div class="a" style="left:1328px;top:707px;width:16px;height:11px;border:1px solid #c8c8c8;background:#e8e8e8"></div>
<svg class="a" style="left:1331px;top:698px" width="10" height="18" viewBox="0 0 10 18"><path d="M1.5 6h7l-3.5-3.5z M1.5 12.5h7l-3.5 3.5z" fill="#000"/></svg>
<div class="a" style="left:0;top:738px;width:1366px;height:30px;background:linear-gradient(to right,#d0e5ee,#d1e4ee 30%,#d3dfea 75%,#d4ddea)"></div>
<svg class="a" style="left:10px;top:745px" width="17" height="16" viewBox="0 0 17 16">
<path d="M0 2.3L6.8 1.3V7.2H0z M8.3 1.1L16.5 0V7.2H8.3z M0 8.8H6.8V14.7L0 13.7z M8.3 8.8H16.5V16L8.3 14.9z" fill="#000"/></svg>
<div class="a" style="left:39px;top:738px;width:160px;height:30px;background:#e9f2f7"></div>
<div class="a" style="left:39px;top:766px;width:160px;height:2px;background:#e81123"></div>
<div class="a" style="left:204px;top:766px;width:152px;height:2px;background:#e81123"></div>
<svg class="a" style="left:47px;top:746px" width="16" height="14" viewBox="0 0 17 15">
<polygon points="1,8 9,0 16,5 8,13" fill="#2a2a2a"/>
<ellipse cx="10" cy="5" rx="4.2" ry="3.3" fill="#e8b868" transform="rotate(-30 10 5)"/>
<circle cx="10" cy="5" r="1.3" fill="#aaa"/></svg>
<div class="a" style="left:67px;top:747px;font-size:12px;letter-spacing:0px;color:#000;transform:scaleX(0.952);transform-origin:0 0;color:#000">HD Tune Pro 5.75 - H...</div>
<svg class="a" style="left:207px;top:745px" width="18" height="16" viewBox="0 0 18 16">
<path d="M8 3.5Q2 3.5 1.2 8.5Q0.8 12.5 4 12Q6 11.5 6.5 13Q7.5 15 10 13.5Q13 11.5 13 8Q12.5 3.5 8 3.5Z" fill="#f4f8fc" stroke="#5a8ab0" stroke-width="1"/>
<circle cx="4" cy="9.5" r="1.1" fill="#e03030"/><circle cx="5" cy="6.8" r="1.1" fill="#30b050"/><circle cx="8" cy="5.8" r="1.1" fill="#f0c020"/><circle cx="8" cy="9.5" r="1.1" fill="#4a90e0"/>
<path d="M14 4.5V14.5" stroke="#f08a10" stroke-width="2.2"/><path d="M13 0.8h2.4l-.3 3.7h-1.8z" fill="#c8a070"/></svg>
<div class="a" style="left:228px;top:747px;font-size:12px;letter-spacing:0px;color:#000;transform:scaleX(0.97);transform-origin:0 0;">Bez názvu - Malování</div>
<svg class="a" style="left:1231px;top:749px" width="14" height="8" viewBox="0 0 14 8"><path d="M1 7L7 1L13 7" stroke="#000" stroke-width="1.2" fill="none"/></svg>
<svg class="a" style="left:1254px;top:744px" width="17" height="18" viewBox="0 0 17 18">
<path d="M7.5 1L1 3.5V9Q1 14 7.5 17Q14 14 14 9V3.5Z" fill="#fff" stroke="#000" stroke-width="1.1"/><path d="M7.5 1V17M1 8.5H14" stroke="#000" stroke-width="1.1"/>
<circle cx="12" cy="13.5" r="4" fill="#1a9a3a"/><path d="M10 13.5l1.4 1.4 2.6-2.6" stroke="#fff" stroke-width="1.2" fill="none"/></svg>
<svg class="a" style="left:1280px;top:747px" width="15" height="14" viewBox="0 0 15 14">
<path d="M1 13Q3 5 11 2M3.5 13Q5 7 11 4.5M6 13Q7 9 11 7.2" stroke="#000" stroke-width="1.1" fill="none"/><circle cx="10" cy="12" r="1.3" fill="#000"/></svg>
<svg class="a" style="left:1301px;top:746px" width="18" height="14" viewBox="0 0 18 14">
<path d="M1 4.5H4L8 1V13L4 9.5H1Z" fill="none" stroke="#000" stroke-width="1.1"/><path d="M10.5 5Q12 7 10.5 9" stroke="#000" fill="none"/><path d="M12.5 3Q15 7 12.5 11" stroke="#666" fill="none"/><path d="M14.5 1Q18 7 14.5 13" stroke="#999" fill="none"/></svg>
<div class="a" style="left:1332px;top:746.5px;font-size:12px;letter-spacing:0px;color:#000;transform:scaleX(0.9);transform-origin:0 0;">7:27</div>
<div class="a" style="left:1361px;top:738px;width:1px;height:30px;background:#8a9aaa"></div>
</body></html>
